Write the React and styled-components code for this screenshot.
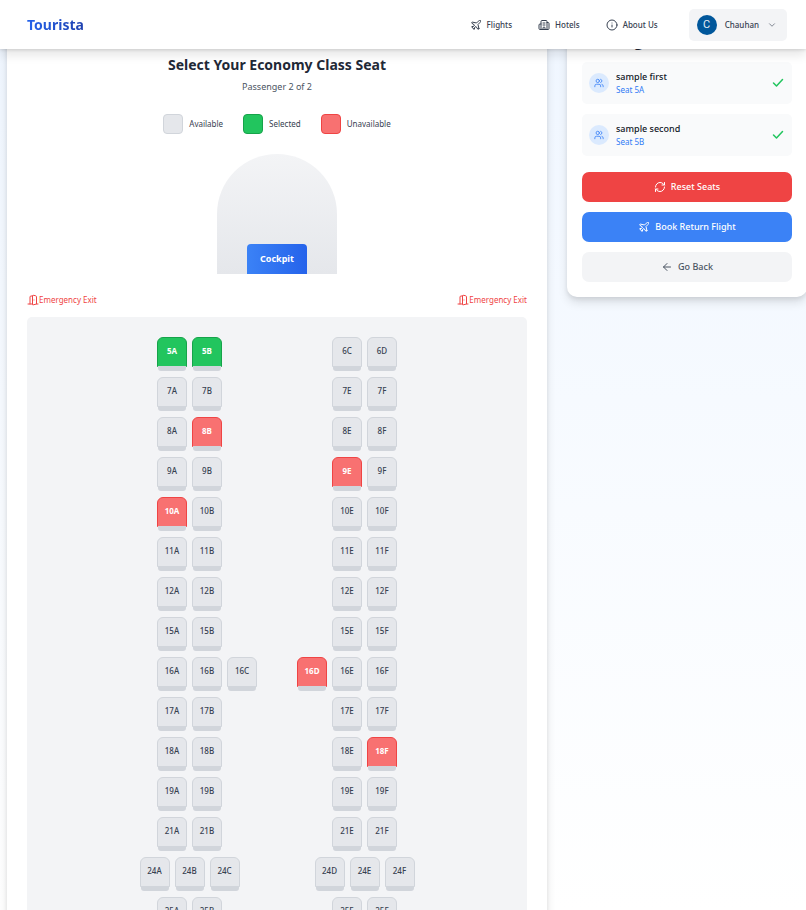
import React, { useState } from "react";
import styled, { createGlobalStyle, css } from "styled-components";
import { Plane, Building2, Info, ChevronDown, Users, RefreshCw, ArrowLeft, DoorOpen } from "lucide-react";

const GlobalStyle = createGlobalStyle`
  *, *::before, *::after { box-sizing: border-box; }
  body {
    margin: 0;
    font-family: "Noto Sans", "Open Sans", sans-serif;
    font-size: 9px;
    line-height: 14px;
    color: #1f2937;
    background: #fff;
  }
  button { font: inherit; cursor: pointer; }
  h1, h2, p, ul { margin: 0; padding: 0; }
`;

const Page = styled.div`
  height: 100vh;
  overflow: hidden;
  background: linear-gradient(to bottom, #eff6ff, #fff);
`;

const Header = styled.header`
  position: relative;
  z-index: 10;
  display: flex;
  align-items: center;
  justify-content: space-between;
  height: 49px;
  padding: 0 19px 0 27px;
  background: #fff;
  box-shadow: 0 6px 10px rgba(0, 0, 0, 0.1), 0 1px 3px rgba(0, 0, 0, 0.12);
`;

const Brand = styled.a`
  font-size: 14px;
  line-height: 20px;
  font-weight: 700;
  text-decoration: none;
  color: transparent;
  background: linear-gradient(to right, #2563eb, #1e40af);
  background-clip: text;
`;

const Nav = styled.nav`
  display: flex;
  align-items: center;
  gap: 26px;
`;

const NavLink = styled.a`
  display: flex;
  align-items: center;
  gap: 5px;
  color: #374151;
  font-size: 8px;
  font-weight: 500;
  text-decoration: none;
`;

const Account = styled.button`
  display: flex;
  align-items: center;
  gap: 8px;
  height: 32px;
  margin-left: 5px;
  padding: 0 10px 0 8px;
  border: 0;
  border-radius: 5px;
  background: #f3f4f6;
  color: #374151;
  font-size: 8px;
  font-weight: 500;
`;

const Avatar = styled.span`
  display: grid;
  place-items: center;
  width: 20px;
  height: 20px;
  border-radius: 50%;
  background: #01579b;
  color: #e5edf5;
  font: 400 11px/20px Roboto, sans-serif;
`;

const Layout = styled.main`
  display: grid;
  grid-template-columns: minmax(0, 1fr) 240px;
  align-items: start;
  gap: 20px;
  margin: -30px -1px 0 7px;
`;

const Card = styled.section`
  background: #fff;
  border-radius: 10px;
  box-shadow: 0 6px 10px rgba(0, 0, 0, 0.1), 0 2px 4px rgba(0, 0, 0, 0.08);
`;

const SeatCard = styled(Card)`
  display: flex;
  flex-direction: column;
  align-items: center;
  padding: 36px 20px 25px;
`;

const Title = styled.h1`
  font-size: 14px;
  line-height: 20px;
  font-weight: 700;
`;

const Subtitle = styled.p`
  margin-top: 5px;
  color: #4b5563;
`;

const Legend = styled.ul`
  display: flex;
  gap: 20px;
  margin-top: 20px;
  list-style: none;
`;

const LegendItem = styled.li`
  display: flex;
  align-items: center;
  gap: 6px;
  color: #374151;
  font-size: 8px;
`;

const tones = {
  available: css`background: #e5e7eb; border-color: #d1d5db; color: #374151;`,
  selected: css`background: #22c55e; border-color: #16a34a; color: #fff; font-weight: 700;`,
  unavailable: css`background: #f87171; border-color: #ef4444; color: #fff; font-weight: 700;`,
};

const Swatch = styled.span`
  width: 20px;
  height: 20px;
  border: 1px solid;
  border-radius: 4px;
  ${({ $tone }) => tones[$tone]}
`;

const Nose = styled.div`
  display: flex;
  align-items: flex-end;
  justify-content: center;
  width: 120px;
  height: 120px;
  margin-top: 20px;
  border-radius: 60px 60px 0 0;
  background: linear-gradient(to bottom, #f3f4f6, #e5e7eb);
`;

const Cockpit = styled.div`
  width: 60px;
  height: 30px;
  border-radius: 4px 4px 0 0;
  background: linear-gradient(to right, #3b82f6, #2563eb);
  color: #fff;
  font-weight: 700;
  line-height: 30px;
  text-align: center;
`;

const Exits = styled.div`
  display: flex;
  justify-content: space-between;
  align-self: stretch;
  margin-top: 19px;
`;

const Exit = styled.span`
  display: flex;
  align-items: center;
  color: #ef4444;
  font-size: 8px;
`;

const Cabin = styled.div`
  display: flex;
  flex-direction: column;
  align-items: center;
  align-self: stretch;
  gap: 10px;
  margin-top: 10px;
  padding: 20px;
  border-radius: 5px;
  background: #f3f4f6;
`;

const SeatRow = styled.div`
  display: grid;
  grid-auto-flow: column;
  grid-auto-columns: 30px;
  gap: 5px;
  height: 30px;
`;

const SeatButton = styled.button`
  position: relative;
  height: 30px;
  padding: 0 0 2px;
  border: 1px solid;
  border-radius: 6px 6px 0 0;
  font-size: 8px;
  line-height: 14px;
  font-weight: 500;
  text-align: center;
  ${({ $tone }) => tones[$tone]}

  &::after {
    content: "";
    position: absolute;
    right: 0;
    bottom: -5px;
    left: 0;
    height: 5px;
    border-radius: 0 0 3px 3px;
    background: #d1d5db;
  }
`;

const SideCard = styled(Card)`
  display: flex;
  flex-direction: column;
  padding: 10px 15px 15px;
`;

const SideTitle = styled.h2`
  font-size: 15px;
  line-height: 24px;
  font-weight: 700;
`;

const Passengers = styled.ul`
  display: grid;
  gap: 10px;
  margin: 9px 0 6px;
  list-style: none;
`;

const Passenger = styled.li`
  display: grid;
  grid-template-columns: 20px 1fr auto;
  align-items: center;
  gap: 7px;
  height: 42px;
  padding: 0 8px 0 7px;
  border-radius: 5px;
  background: #f9fafb;
`;

const PassengerIcon = styled.span`
  display: grid;
  place-items: center;
  width: 20px;
  height: 20px;
  border-radius: 50%;
  background: #dbeafe;
  color: #3b82f6;
`;

const PassengerName = styled.p`
  line-height: 14px;
  font-weight: 500;
  color: #111827;
`;

const PassengerSeat = styled.p`
  font-size: 8px;
  line-height: 12px;
  color: #2f7bf5;
`;

const CheckMark = styled.svg`
  width: 12px;
  height: 12px;
  fill: none;
  stroke: #22c55e;
  stroke-width: 3;
  stroke-linecap: round;
  stroke-linejoin: round;
`;

const actions = {
  danger: css`background: #ef4444; color: #fff;`,
  primary: css`background: #3b82f6; color: #fff;`,
  neutral: css`background: #f3f4f6; color: #4b5563;`,
};

const Action = styled.button`
  display: flex;
  align-items: center;
  justify-content: center;
  gap: 5px;
  height: 30px;
  margin-top: 10px;
  border: 0;
  border-radius: 7px;
  font-weight: 500;
  ${({ $kind }) => actions[$kind]}
`;

const ROWS = [
  "5A 5B - - - 6C 6D", "7A 7B - - - 7E 7F", "8A 8B - - - 8E 8F", "9A 9B - - - 9E 9F",
  "10A 10B - - - 10E 10F", "11A 11B - - - 11E 11F", "12A 12B - - - 12E 12F",
  "15A 15B - - - 15E 15F", "16A 16B 16C - 16D 16E 16F", "17A 17B - - - 17E 17F",
  "18A 18B - - - 18E 18F", "19A 19B - - - 19E 19F", "21A 21B - - - 21E 21F",
  "24A 24B 24C - - 24D 24E 24F", "25A 25B - - - 25E 25F",
].map((row) => row.split(" "));

const TAKEN = ["8B", "9E", "10A", "16D", "18F"];
const PASSENGERS = [["sample first", "5A"], ["sample second", "5B"]];

export default function App() {
  const [selected, setSelected] = useState(["5A", "5B"]);
  const toneOf = (id) =>
    TAKEN.includes(id) ? "unavailable" : selected.includes(id) ? "selected" : "available";
  const toggle = (id) =>
    setSelected((s) => (s.includes(id) ? s.filter((x) => x !== id) : [...s, id].slice(-2)));

  return (
    <Page>
      <GlobalStyle />
      <Header>
        <Brand href="#">Tourista</Brand>
        <Nav>
          <NavLink href="#flights"><Plane size={12} />Flights</NavLink>
          <NavLink href="#hotels"><Building2 size={12} />Hotels</NavLink>
          <NavLink href="#about"><Info size={12} />About Us</NavLink>
          <Account type="button"><Avatar>C</Avatar>Chauhan<ChevronDown size={10} color="#6b7280" /></Account>
        </Nav>
      </Header>
      <Layout>
        <SeatCard>
          <Title>Select Your Economy Class Seat</Title>
          <Subtitle>Passenger 2 of 2</Subtitle>
          <Legend>
            <LegendItem><Swatch $tone="available" />Available</LegendItem>
            <LegendItem><Swatch $tone="selected" />Selected</LegendItem>
            <LegendItem><Swatch $tone="unavailable" />Unavailable</LegendItem>
          </Legend>
          <Nose><Cockpit>Cockpit</Cockpit></Nose>
          <Exits>
            <Exit><DoorOpen size={12} />Emergency Exit</Exit>
            <Exit><DoorOpen size={12} />Emergency Exit</Exit>
          </Exits>
          <Cabin>
            {ROWS.map((row) => (
              <SeatRow key={row[0]}>
                {row.map((id, i) =>
                  id === "-" ? <span key={i} /> : (
                    <SeatButton key={id} type="button" $tone={toneOf(id)}
                      disabled={TAKEN.includes(id)} onClick={() => toggle(id)}>{id}</SeatButton>
                  )
                )}
              </SeatRow>
            ))}
          </Cabin>
        </SeatCard>
        <SideCard>
          <SideTitle>Passengers</SideTitle>
          <Passengers>
            {PASSENGERS.map(([name, seat]) => (
              <Passenger key={name}>
                <PassengerIcon><Users size={10} /></PassengerIcon>
                <div>
                  <PassengerName>{name}</PassengerName>
                  <PassengerSeat>Seat {seat}</PassengerSeat>
                </div>
                <CheckMark viewBox="0 0 24 24" aria-hidden="true"><path d="M21 5 9 18l-6-6" /></CheckMark>
              </Passenger>
            ))}
          </Passengers>
          <Action type="button" $kind="danger" onClick={() => setSelected([])}><RefreshCw size={12} />Reset Seats</Action>
          <Action type="button" $kind="primary"><Plane size={12} />Book Return Flight</Action>
          <Action type="button" $kind="neutral"><ArrowLeft size={12} />Go Back</Action>
        </SideCard>
      </Layout>
    </Page>
  );
}
